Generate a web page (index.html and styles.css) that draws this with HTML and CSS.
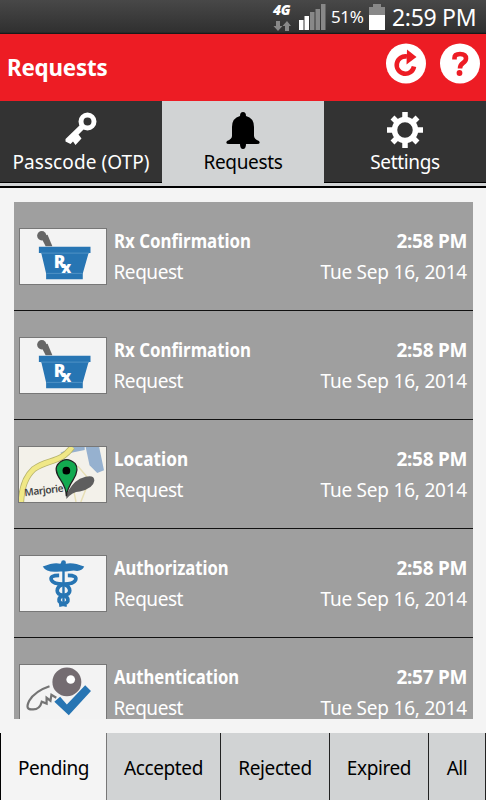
FILE: index.html
```html
<!DOCTYPE html>
<html lang="en">
<head>
<meta charset="utf-8">
<title>Requests</title>
<link rel="stylesheet" href="styles.css">
</head>
<body>
<svg width="0" height="0" class="defs">
  <symbol id="rx" viewBox="0 0 88 57">
    <path d="M21 8L28 6L33 18H26Z" fill="#666"/><circle cx="22" cy="7" r="4.800" fill="#666"/>
    <path d="M19 18.500H72.500V25H70.500L64.500 46V52H26.500V46L21.500 25H19Z" fill="#2775b3"/>
    <path d="M21 25H71M27 46H64" stroke="#5d9bcb" stroke-width=".8"/>
    <text x="34.500" y="40.500" class="rx-r">R</text><text x="42.500" y="46" class="rx-x">x</text>
  </symbol>
</svg>
<div class="status">
  <div class="network"><span>4G</span>
    <svg width="18" height="10" viewBox="0 0 18 10" fill="#888"><path d="M3 0H7V5H9.500L5 10L.500 5H3Z M12 10H16V5H18L14 0L9.500 5H12Z"/></svg>
  </div>
  <svg class="signal" width="27" height="26" viewBox="0 0 27 26"><path fill="#fff" d="M0 16H4.500V26H0ZM5.500 12H10V26H5.500Z"/><path fill="#888" d="M11 8H15.500V26H11ZM16.500 5H21V26H16.500ZM22 0H26.500V26H22Z"/></svg>
  <span class="percent">51%</span>
  <svg class="battery" width="16" height="26" viewBox="0 0 16 26"><path fill="#888" d="M4 0H12V3H16V11H0V3H4Z"/><path fill="#fff" d="M0 11H16V26H0Z"/></svg>
  <span class="clock">2:59 PM</span>
</div>
<header class="header">
  <h1>Requests</h1>
  <svg width="40" height="41" viewBox="0 0 40 41"><circle cx="20" cy="20.500" r="20" fill="#fff"/><path d="M21 13.500A8.700 8.700 0 1 0 28 23.500" fill="none" stroke="#ed1c24" stroke-width="4.600"/><path d="M21 6.500L30.500 14L20.500 21.500Z" fill="#ed1c24"/></svg>
  <svg width="40" height="41" viewBox="0 0 40 41"><circle cx="20" cy="20.500" r="20" fill="#fff"/><path d="M14.500 16.500V15Q14.500 11 20 11Q26 11 26 15.500Q26 18 23 20Q20 22 20 25.500" fill="none" stroke="#ed1c24" stroke-width="4.600"/><circle cx="19.500" cy="30" r="2.900" fill="#ed1c24"/></svg>
</header>
<nav class="nav">
  <div class="tab">
    <svg width="32" height="34" viewBox="0 0 32 34"><circle cx="22.500" cy="9.500" r="6.500" fill="none" stroke="#fff" stroke-width="5"/><path d="M15 13L19 17L13.500 22.500L16.500 26.500L10.500 33L8 29.500L5.500 32L.500 29.500V27Z" fill="#fff"/></svg>
    <span class="passcode">Passcode (OTP)</span>
  </div>
  <div class="tab active">
    <svg width="34" height="38" viewBox="0 0 34 38"><path d="M14 4Q14 0 17 0Q20 0 20 4Q28 6 28 15V24Q28 27 33 29Q35 32 31 32H20Q20 37 17 37Q14 37 14 32H3Q-1 32 1 29Q6 27 6 24V15Q6 6 14 4Z"/></svg>
    <span>Requests</span>
  </div>
  <div class="tab">
    <svg width="36" height="36" viewBox="0 0 36 36"><circle cx="18" cy="18" r="10.500" fill="none" stroke="#fff" stroke-width="5.500"/><path d="M18 6V0M18 36V30M6 18H0M36 18H30M9.500 9.500L5.500 5.500M26.500 9.500L30.500 5.500M9.500 26.500L5.500 30.500M26.500 26.500L30.500 30.500" stroke="#fff" stroke-width="5.500"/></svg>
    <span>Settings</span>
  </div>
</nav>
<main class="list">
  <article class="row"><svg class="thumb"><use href="#rx"/></svg><div class="info"><b>Rx Confirmation</b><span>Request</span></div><div class="when"><b>2:58 PM</b><span>Tue Sep 16, 2014</span></div></article>
  <article class="row"><svg class="thumb"><use href="#rx"/></svg><div class="info"><b>Rx Confirmation</b><span>Request</span></div><div class="when"><b>2:58 PM</b><span>Tue Sep 16, 2014</span></div></article>
  <article class="row"><svg class="thumb map" viewBox="0 0 88 57">
    <path d="M42 6L55 0H67V3L43 8ZM68 0H82L87 24L80 27L72 19Z" fill="#96b1cf"/>
    <path d="M1 57Q2 34 14 23C29 12 42 17 54 0" fill="none" stroke="#b7b46e" stroke-width="6.500"/><path d="M1 57Q2 34 14 23C29 12 42 17 54 0" fill="none" stroke="#f0e886" stroke-width="4.800"/>
    <path d="M60 20L72 34L63 57M55 42L58 57" fill="none" stroke="#e7dfb4" stroke-width="1.500"/>
    <text x="5" y="51" class="street" transform="rotate(-7 5 51)">Marjorie</text>
    <path d="M48 50Q53 38 62 33Q77 27 77 35Q76 43 62 46Q54 46 48 54Z" fill="#5e5e5e"/>
    <path d="M48 51Q48 43 42 34Q34 23 40 17Q48 9 57 17Q62 23 55 34Q49 43 48 51Z" fill="#12a950" stroke="#222" stroke-width="1.300"/><circle cx="48" cy="24.500" r="4"/>
  </svg><div class="info"><b class="location">Location</b><span>Request</span></div><div class="when"><b>2:58 PM</b><span>Tue Sep 16, 2014</span></div></article>
  <article class="row"><svg class="thumb" viewBox="0 0 88 57">
    <path d="M23 11Q35 6 41 8L44 6L47 8Q54 6 66 11Q63 17 55 15L47 16H41Q27 18 23 11Z" fill="#2775b3"/>
    <path d="M44.500 6V51" stroke="#2775b3" stroke-width="2.500"/>
    <path d="M40 20Q30 20 32 25Q34 29 44 29Q51 31 51 36Q51 40 44 41Q39 43 40 47Q42 50 48 51M49 20Q59 20 57 25Q55 29 45 29Q38 31 38 36Q38 40 45 41Q50 43 49 47Q47 50 40 51" fill="none" stroke="#2775b3" stroke-width="3.800"/>
    <circle cx="44.500" cy="7" r="2.500" fill="#2775b3"/>
  </svg><div class="info"><b class="long">Authorization</b><span>Request</span></div><div class="when"><b>2:58 PM</b><span>Tue Sep 16, 2014</span></div></article>
  <article class="row"><svg class="thumb" viewBox="0 0 88 57">
    <path d="M30 22Q15 27 9 37Q4 47 13 46Q20 46 22 38L27 40V34L31 37L32 31L37 34" fill="none" stroke="#747474" stroke-width="2.300"/>
    <circle cx="48" cy="17.500" r="15" fill="#746c71"/><circle cx="52" cy="15" r="4.500" fill="#fff"/>
    <path d="M35 38L41 33L48 41L67 21L73 27L50 52Z" fill="#2775b3"/>
  </svg><div class="info"><b class="long">Authentication</b><span>Request</span></div><div class="when"><b>2:57 PM</b><span>Tue Sep 16, 2014</span></div></article>
</main>
<footer class="filters">
  <div class="selected">Pending</div><div>Accepted</div><div>Rejected</div><div>Expired</div><div>All</div>
</footer>
</body>
</html>
```
FILE: styles.css
```css
* { box-sizing: border-box; }
body { margin: 0; width: 486px; height: 800px; overflow: hidden; display: flex; flex-direction: column; background: #f4f4f4; font-family: "Noto Sans", sans-serif; font-size: 19px; line-height: 31px; }
svg { display: block; flex: none; }
.defs { position: absolute; }
.status { height: 34px; flex: none; display: flex; justify-content: flex-end; align-items: flex-start; padding-right: 10px; color: #fff; background: linear-gradient(#484848, #303030 32px, #111); }
.network { width: 19px; margin: 4px 7px 0 0; }
.network span { display: block; font: italic 800 14px/12px "Open Sans", sans-serif; margin-bottom: 5px; letter-spacing: -.3px; }
.signal { margin: 4px 5px 0 0; }
.percent { width: 38px; font-size: 17px; line-height: 34px; letter-spacing: -.4px; white-space: nowrap; }
.battery { margin-top: 4px; }
.clock { width: 84px; margin-left: 7px; font-size: 23px; line-height: 35px; letter-spacing: -.3px; white-space: nowrap; }
.header { height: 67px; flex: none; display: flex; align-items: flex-start; padding: 9px 6px 0 7px; gap: 14px; background: #ed1c24; color: #fff; }
.header h1 { flex: 1; margin: 8px 0 0; font-size: 23.5px; line-height: 32px; letter-spacing: -.2px; transform: scaleX(.95); transform-origin: left; }
.nav { height: 87px; flex: none; display: grid; grid-template-columns: repeat(3, 1fr); background: #d1d3d4; border-bottom: 2px solid #000; padding-bottom: 3px; }
.tab { height: 82px; display: flex; flex-direction: column; align-items: center; justify-content: space-between; padding: 11px 0 5px; background: #333; color: #fff; border-bottom: 1px solid #000; white-space: nowrap; }
.tab svg { margin-bottom: -8px; }
.tab span { line-height: 29px; letter-spacing: -.35px; }
.tab .passcode { letter-spacing: .07px; }
.tab.active { background: #d1d3d4; color: #000; border-color: #d1d3d4; }
.list { margin: 14px 13px 14px 14px; height: 517px; flex: none; overflow: hidden; background: #9f9f9f; }
.row { height: 109px; border-bottom: 1px solid #111; display: flex; padding: 24px 6px 0 5px; color: #fff; white-space: nowrap; }
.thumb { width: 88px; height: 57px; margin-top: 2px; background: #f3f3f3; border: 1px solid #777; }
.map { width: 89px; margin-left: -1px; background: #f3f1ea; }
.info { flex: 1; margin-left: 6.5px; }
.info > *, .when > * { display: block; }
.info b { width: max-content; transform: scaleX(.888); transform-origin: left; }
.info b.location { transform: scaleX(.905); }
.info b.long { transform: scaleX(.875); }
.info span { letter-spacing: -.45px; }
.when { text-align: right; }
.when b { letter-spacing: -.3px; }
.when span { letter-spacing: -.22px; }
.rx-r { font: 800 18px "Open Sans", sans-serif; fill: #fff; }
.rx-x { font: 800 16px "Open Sans", sans-serif; fill: #fff; }
.street { font: 600 10.5px "Noto Sans", sans-serif; letter-spacing: -.4px; fill: #444; }
.filters { height: 67px; flex: none; display: grid; grid-template-columns: 106px 114px 109px 99px 57px; background: #d1d3d4; border-left: 1px solid #000; letter-spacing: -.4px; }
.filters div { display: flex; align-items: center; justify-content: center; padding-top: 3px; border-right: 1px solid #222; }
.filters .selected { background: #f4f4f4; border-color: #777; }
```
